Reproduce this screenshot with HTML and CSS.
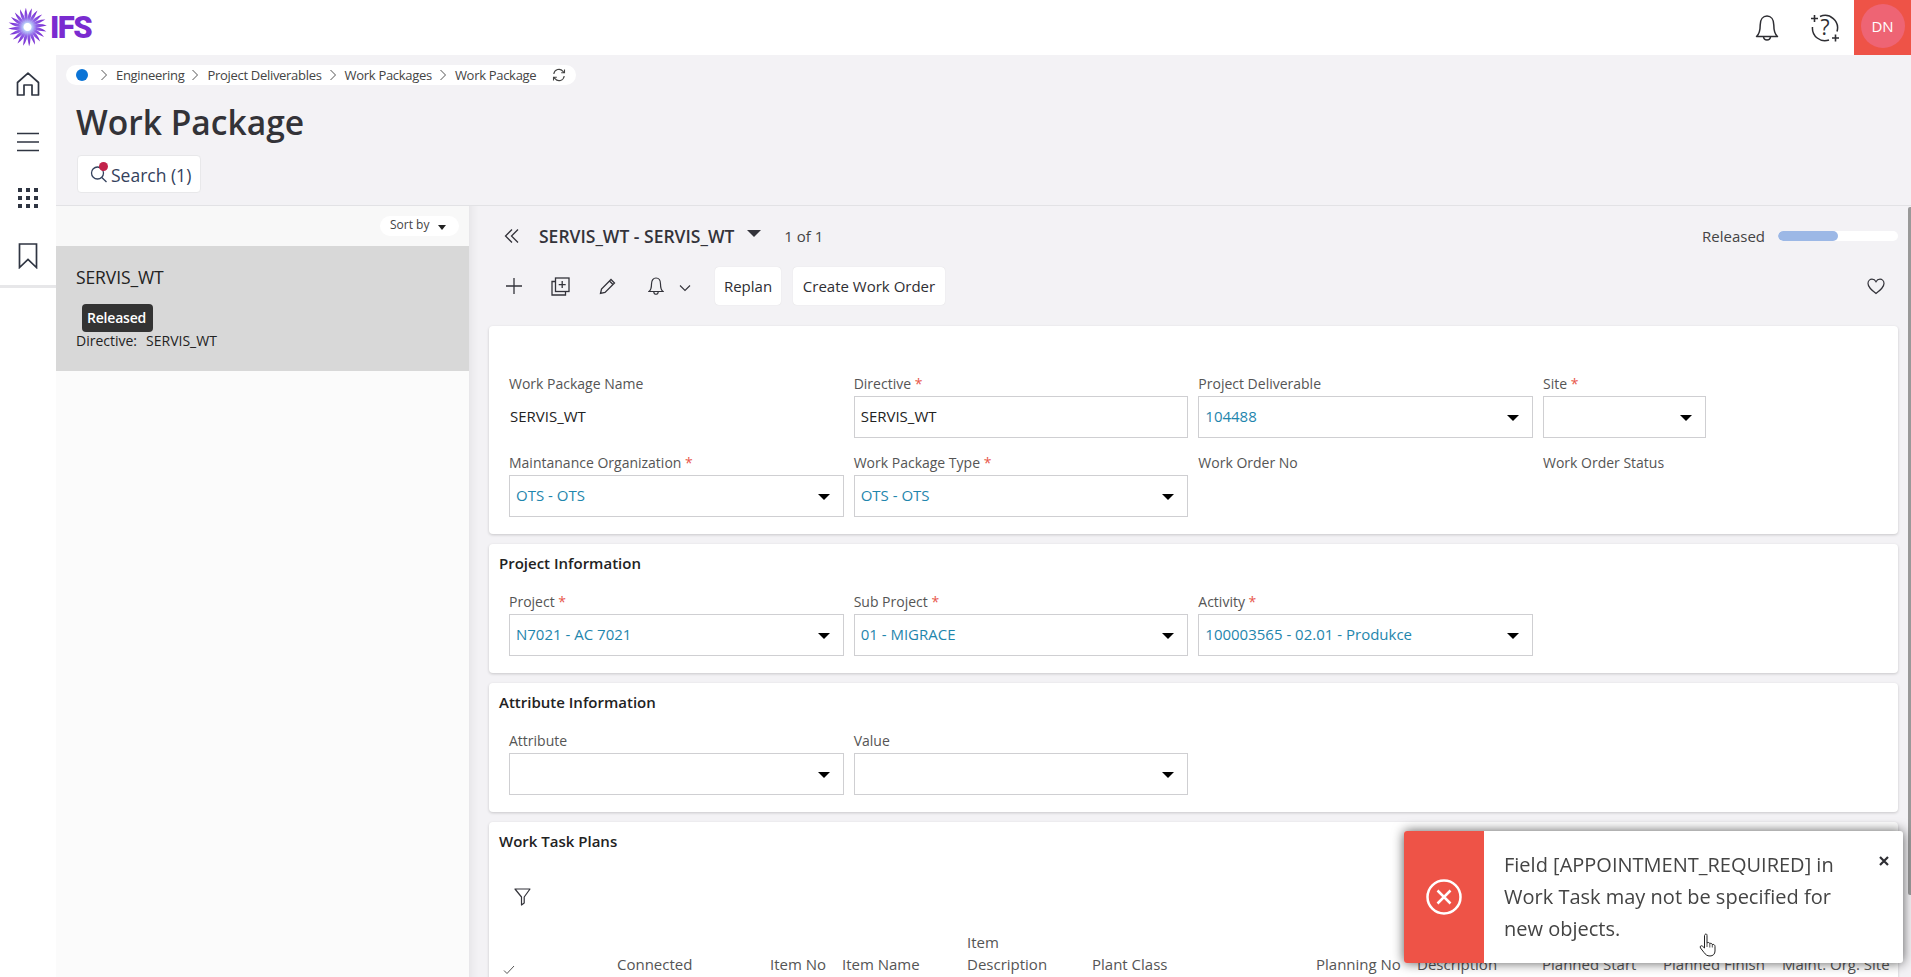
FILE: index.html
```html
<!DOCTYPE html>
<html lang="en">
<head>
<meta charset="utf-8">
<title>Work Package</title>
<link rel="stylesheet" href="styles.css">
</head>
<body>
<svg class="defs" width="0" height="0" aria-hidden="true">
  <defs>
    <symbol id="crumb" viewBox="0 0 8 12"><path d="M1.5 1 L6.5 6 L1.5 11" fill="none" stroke="#555" stroke-width="1"/></symbol>
    <linearGradient id="petal" gradientUnits="userSpaceOnUse" x1="0" y1="-4" x2="3" y2="-19">
      <stop offset="0" stop-color="#bcd4fb"/><stop offset=".35" stop-color="#8f5fe6"/><stop offset="1" stop-color="#7320cc"/>
    </linearGradient>
    <path id="ray" d="M-.5 -4 Q-.4 -12.5 4.400 -18.800 Q4.300 -11.500 1.700 -4 Z" fill="url(#petal)"/>
  </defs>
</svg>

<header class="topbar">
  <div class="logo">
    <svg class="logo-mark" width="40" height="40" viewBox="0 0 40 40">
      <g transform="translate(19.5 19)">
        <use href="#ray"/><use href="#ray" transform="rotate(18)"/><use href="#ray" transform="rotate(36)"/><use href="#ray" transform="rotate(54)"/><use href="#ray" transform="rotate(72)"/><use href="#ray" transform="rotate(90)"/><use href="#ray" transform="rotate(108)"/><use href="#ray" transform="rotate(126)"/><use href="#ray" transform="rotate(144)"/><use href="#ray" transform="rotate(162)"/><use href="#ray" transform="rotate(180)"/><use href="#ray" transform="rotate(198)"/><use href="#ray" transform="rotate(216)"/><use href="#ray" transform="rotate(234)"/><use href="#ray" transform="rotate(252)"/><use href="#ray" transform="rotate(270)"/><use href="#ray" transform="rotate(288)"/><use href="#ray" transform="rotate(306)"/><use href="#ray" transform="rotate(324)"/><use href="#ray" transform="rotate(342)"/>
      </g>
    </svg>
    <span class="logo-text">IFS</span>
  </div>
  <div class="top-actions">
    <svg class="top-icon bell-top" width="24" height="28" viewBox="0 0 24 28" fill="none" stroke="#2e2e33" stroke-width="1.5"><path d="M1.5 22.5 C4.5 20 5.2 16 5.2 11 C5.2 5.5 8 2 12 2 C16 2 18.8 5.5 18.8 11 C18.8 16 19.5 20 22.5 22.5 Z" stroke-linejoin="round"/><path d="M8.5 23 C9 27 15 27 15.500 23"/></svg>
    <svg class="top-icon help-top" width="30" height="30" viewBox="0 0 30 30" fill="none" stroke="#2e2e33" stroke-width="1.5"><path d="M10 3.500 A12.500 12.500 0 0 1 27 18.500"/><path d="M19 27 A12.500 12.500 0 0 1 2.500 14"/><path d="M1 5.500 H8 M4.500 2 V9 M22 25 H29 M25.500 21.500 V28.500" stroke-width="1.600"/><text class="help-q" x="15" y="21.500" text-anchor="middle">?</text></svg>
    <div class="user"><span class="avatar">DN</span></div>
  </div>
</header>

<div class="shell">
  <nav class="rail">
    <div class="rail-items">
      <svg width="24" height="24" viewBox="0 0 24 24" fill="none" stroke="#2f3542" stroke-width="1.700"><path d="M1.500 10.500 L12 1.200 L22.500 10.500 V23 H16 V13 H8 V23 H1.500 Z" stroke-linejoin="round"/></svg>
      <svg width="24" height="20" viewBox="0 0 24 20" fill="none" stroke="#2f3542" stroke-width="1.700"><path d="M1 1.500 H23 M1 10 H23 M1 18.500 H23"/></svg>
      <svg class="grid-icon" width="20" height="20" viewBox="0 0 20 20" fill="#2f3542"><rect x="0" y="0" width="4" height="4"/><rect x="8" y="0" width="4" height="4"/><rect x="16" y="0" width="4" height="4"/><rect x="0" y="8" width="4" height="4"/><rect x="8" y="8" width="4" height="4"/><rect x="16" y="8" width="4" height="4"/><rect x="0" y="16" width="4" height="4"/><rect x="8" y="16" width="4" height="4"/><rect x="16" y="16" width="4" height="4"/></svg>
      <svg width="20" height="26" viewBox="0 0 20 26" fill="none" stroke="#2f3542" stroke-width="1.700"><path d="M1.500 1 H18.500 V24.500 L10 16.500 L1.500 24.500 Z" stroke-linejoin="miter"/></svg>
    </div>
  </nav>

  <main class="content">
    <div class="page-head">
      <div class="breadcrumb">
        <span class="crumb-dot"></span>
        <svg class="crumb-sep first" width="8" height="12"><use href="#crumb"/></svg>
        <span>Engineering</span>
        <svg class="crumb-sep" width="8" height="12"><use href="#crumb"/></svg>
        <span>Project Deliverables</span>
        <svg class="crumb-sep" width="8" height="12"><use href="#crumb"/></svg>
        <span>Work Packages</span>
        <svg class="crumb-sep" width="8" height="12"><use href="#crumb"/></svg>
        <span>Work Package</span>
        <svg class="crumb-refresh" width="14" height="14" viewBox="0 0 14 14" fill="none" stroke="#444" stroke-width="1.100"><path d="M1.800 6 A5.200 5.200 0 0 1 11 3.300 L12.500 4.800 M12.500 1.500 V4.800 H9.200"/><path d="M12.200 8 A5.200 5.200 0 0 1 3 10.700 L1.500 9.200 M1.500 12.500 V9.200 H4.800"/></svg>
      </div>
      <h1 class="page-title">Work Package</h1>
      <button class="search-btn">
        <span class="search-icon">
          <svg width="18" height="18" viewBox="0 0 18 18" fill="none" stroke="#33415c" stroke-width="1.300"><circle cx="7.500" cy="8" r="6"/><path d="M11.800 12.500 L16.500 17"/></svg>
          <span class="search-dot"></span>
        </span>
        <span class="search-label">Search (1)</span>
      </button>
    </div>

    <div class="split">
      <aside class="list-pane">
        <div class="list-tools"><span class="sort">Sort by<i class="mini-caret"></i></span></div>
        <div class="list-item">
          <div class="item-name">SERVIS_WT</div>
          <span class="badge">Released</span>
          <div class="item-meta"><span>Directive:</span><span>SERVIS_WT</span></div>
        </div>
      </aside>

      <section class="detail">
        <span class="scrollbar"></span>
        <div class="detail-head">
          <svg class="collapse" width="16" height="16" viewBox="0 0 16 16" fill="none" stroke="#33333a" stroke-width="1.300"><path d="M8 1.500 L1.500 8 L8 14.500 M14 1.500 L7.500 8 L14 14.500"/></svg>
          <span class="record">SERVIS_WT - SERVIS_WT</span>
          <i class="record-caret"></i>
          <span class="pager">1 of 1</span>
          <span class="state">Released</span>
          <span class="progress"><span class="progress-fill"></span></span>
        </div>

        <div class="toolbar">
          <span class="tool"><svg width="18" height="18" viewBox="0 0 18 18" fill="none" stroke="#33333a" stroke-width="1.300"><path d="M9 1 V17 M1 9 H17"/></svg></span>
          <span class="tool"><svg width="19" height="19" viewBox="0 0 19 19" fill="none" stroke="#33333a" stroke-width="1.300"><rect x="4.500" y="1" width="13.500" height="13.500"/><path d="M4.500 4.500 H1 V18 H14.500 V14.500 M11.200 4 V11 M7.700 7.700 H14.700"/></svg></span>
          <span class="tool"><svg width="17" height="17" viewBox="0 0 17 17" fill="none" stroke="#33333a" stroke-width="1.300"><path d="M1.500 15.500 L2.500 11 L12 1.500 L15.500 5 L6 14.500 Z M10.500 3 L14 6.500"/></svg></span>
          <span class="tool tool-bell"><svg width="16" height="19" viewBox="0 0 16 19" fill="none" stroke="#33333a" stroke-width="1.200"><path d="M1 14.500 C3 13 3.500 10 3.500 7 C3.500 3.500 5.300 1 8 1 C10.700 1 12.500 3.500 12.500 7 C12.500 10 13 13 15 14.500 Z"/><path d="M5.800 15 C6 18 10 18 10.200 15"/></svg></span>
          <svg class="tool-chevron" width="12" height="8" viewBox="0 0 12 8" fill="none" stroke="#33333a" stroke-width="1.100"><path d="M1 1.500 L6 6.500 L11 1.500"/></svg>
          <button class="cmd cmd-first">Replan</button>
          <button class="cmd cmd-wide">Create Work Order</button>
          <svg class="heart" width="18" height="17" viewBox="0 0 18 17" fill="none" stroke="#33333a" stroke-width="1.200"><path d="M9 15.500 C4 11.500 1 9 1 5.500 C1 3 3 1.200 5 1.200 C6.800 1.200 8.200 2.200 9 3.700 C9.800 2.200 11.200 1.200 13 1.200 C15 1.200 17 3 17 5.500 C17 9 14 11.500 9 15.500 Z"/></svg>
        </div>

        <div class="card card-main">
          <div class="form-grid">
            <div class="field"><label>Work Package Name</label><div class="static">SERVIS_WT</div></div>
            <div class="field"><label>Directive <b>*</b></label><div class="box">SERVIS_WT</div></div>
            <div class="field"><label>Project Deliverable</label><div class="box link">104488<i class="caret"></i></div></div>
            <div class="field field-narrow"><label>Site <b>*</b></label><div class="box link"><i class="caret"></i></div></div>
            <div class="field"><label>Maintanance Organization <b>*</b></label><div class="box link">OTS - OTS<i class="caret"></i></div></div>
            <div class="field"><label>Work Package Type <b>*</b></label><div class="box link">OTS - OTS<i class="caret"></i></div></div>
            <div class="field"><label>Work Order No</label><div class="static"></div></div>
            <div class="field"><label>Work Order Status</label><div class="static"></div></div>
          </div>
        </div>

        <div class="card">
          <h2 class="card-title">Project Information</h2>
          <div class="form-grid">
            <div class="field"><label>Project <b>*</b></label><div class="box link">N7021 - AC 7021<i class="caret"></i></div></div>
            <div class="field"><label>Sub Project <b>*</b></label><div class="box link">01 - MIGRACE<i class="caret"></i></div></div>
            <div class="field"><label>Activity <b>*</b></label><div class="box link">100003565 - 02.01 - Produkce<i class="caret"></i></div></div>
          </div>
        </div>

        <div class="card">
          <h2 class="card-title">Attribute Information</h2>
          <div class="form-grid">
            <div class="field"><label>Attribute</label><div class="box"><i class="caret"></i></div></div>
            <div class="field"><label>Value</label><div class="box"><i class="caret"></i></div></div>
          </div>
        </div>

        <div class="card card-table">
          <h2 class="card-title">Work Task Plans</h2>
          <svg class="filter" width="17" height="18" viewBox="0 0 17 18" fill="none" stroke="#33333a" stroke-width="1.200"><path d="M1 1 H16 L10.200 9 V15 L7.500 17 V9 Z" stroke-linejoin="round"/></svg>
          <div class="table-head">
            <svg class="th-check" width="12" height="10" viewBox="0 0 12 10" fill="none" stroke="#555" stroke-width="1"><path d="M1 5.500 L4 8.500 L11 1"/></svg>
            <span class="th th-1">Connected</span>
            <span class="th th-2">Item No</span>
            <span class="th th-3">Item Name</span>
            <span class="th th-4">Item Description</span>
            <span class="th th-5">Plant Class</span>
            <span class="th th-6">Planning No</span>
            <span class="th th-7">Description</span>
            <span class="th th-8">Planned Start</span>
            <span class="th th-9">Planned Finish</span>
            <span class="th th-10">Maint. Org. Site</span>
          </div>
        </div>
      </section>
    </div>
  </main>
</div>

<div class="toast">
  <div class="toast-side">
    <svg width="36" height="36" viewBox="0 0 36 36" fill="none" stroke="#fff" stroke-width="2.500"><circle cx="18" cy="18" r="16.500"/><path d="M11.500 11.500 L24.500 24.500 M24.500 11.500 L11.500 24.500"/></svg>
  </div>
  <p class="toast-text">Field [APPOINTMENT_REQUIRED] in Work Task may not be specified for new objects.</p>
  <svg class="toast-close" width="10" height="10" viewBox="0 0 10 10" fill="none" stroke="#2e2e33" stroke-width="2.200"><path d="M1 1 L9 9 M9 1 L1 9"/></svg>
</div>

<svg class="cursor" width="18" height="24" viewBox="0 0 18 24"><path d="M6 1.500 C7 .5 8 1 8 2.500 V10 C9 9 10.500 9.500 10.800 10.500 C12 10 13 10.500 13.300 11.500 C14.500 11 16 11.800 16 13.500 V18 C16 21 14 23 11 23 C8 23 6.500 21.500 5 19.500 L1.500 15 C.5 13.500 2 12 3.500 13.200 L5.500 15 V2.500 Z" fill="#fff" stroke="#222" stroke-width="1"/><path d="M8 10 V14 M10.800 10.500 V14.500 M13.300 11.500 V14.500" stroke="#222" stroke-width=".8"/></svg>
</body>
</html>
```

FILE: styles.css
```css
* { box-sizing: border-box; }
html, body { margin: 0; height: 977px; overflow: hidden; }
body { font-family: "Open Sans", "Noto Sans", sans-serif; font-size: 14px; color: #2e2e33; background: #fff; }
.defs { position: absolute; }

.topbar { height: 55px; display: flex; align-items: center; justify-content: space-between; background: #fff; }
.logo { display: flex; align-items: center; padding-left: 8px; height: 50px; }
.logo-mark { display: block; flex: none; }
.logo-text { margin-left: 2px; font-family: "Roboto", "Liberation Sans", sans-serif; font-weight: 900; font-size: 31px; line-height: 50px; letter-spacing: -1.5px; color: #7a2bd0; }
.top-actions { display: flex; align-items: center; height: 100%; }
.bell-top { margin-right: 31px; }
.help-top { margin-right: 14px; }
.help-q { font-family: "Open Sans", sans-serif; font-size: 21px; fill: #2e2e33; stroke: none; }
.user { width: 57px; height: 55px; background: #ee5347; display: flex; align-items: flex-start; justify-content: center; padding-top: 4px; }
.avatar { width: 44px; height: 44px; border-radius: 50%; background: #ee6474; color: #fff; font-size: 15px; display: flex; align-items: center; justify-content: center; }

.shell { display: flex; height: 922px; }
.rail { width: 56px; flex: none; background: #fff; }
.rail-items { height: 233px; border-bottom: 3px solid #e7e7e9; display: flex; flex-direction: column; align-items: center; padding-top: 17px; }
.rail-items svg { display: block; flex: none; margin-bottom: 36px; }
.rail-items .grid-icon { margin-bottom: 35px; }
.rail-items svg:last-child { margin-bottom: 0; }
.content { flex: 1; min-width: 0; display: flex; flex-direction: column; background: #f3f2f5; }

.page-head { height: 151px; padding: 10px 0 0 10px; border-bottom: 1px solid #e2e2e5; }
.breadcrumb { display: flex; align-items: center; height: 20px; width: 510px; background: #fff; border-radius: 10px; font-size: 13px; letter-spacing: -.3px; color: #444; padding-left: 10px; white-space: nowrap; }
.crumb-dot { width: 12px; height: 12px; background: #0b74d6; border-radius: 50%; flex: none; }
.crumb-sep { margin: 0 8px 0 7px; flex: none; }
.crumb-sep.first { margin-left: 12px; }
.crumb-refresh { margin-left: 16px; flex: none; }
.page-title { margin: 15px 0 0 10px; font-size: 33.6px; line-height: 44px; font-weight: 600; color: #333338; display: block; white-space: nowrap; }
.search-btn { display: flex; align-items: center; margin: 11px 0 0 11px; height: 38px; width: 124px; padding: 0 0 0 12px; background: #fff; border: 1px solid #e8e8ea; border-radius: 4px; font-family: inherit; font-size: 17.5px; color: #33415c; white-space: nowrap; }
.search-label { padding-top: 1px; }
.search-icon { position: relative; width: 18px; height: 18px; margin-right: 3px; display: block; }
.search-icon svg { display: block; }
.search-dot { position: absolute; top: -3px; left: 9px; width: 9px; height: 9px; border-radius: 50%; background: #c2224a; }

.split { flex: 1; display: flex; min-height: 0; }
.list-pane { width: 413px; flex: none; background: #fbfbfb; }
.list-tools { height: 40px; display: flex; justify-content: flex-end; align-items: flex-start; padding: 10px 10px 0 0; background: #f8f8f8; }
.sort { height: 20px; width: 79px; background: #fff; border-radius: 10px; display: flex; align-items: center; padding: 0 0 3px 10px; font-size: 12px; color: #444; }
.mini-caret { margin: 5px 0 0 9px; border: 4px solid transparent; border-top: 5px solid #222; border-bottom: 0; }
.list-item { height: 125px; background: #d8d8d8; padding: 20px 0 0 20px; color: #222; }
.item-name { font-size: 17.5px; line-height: 22px; letter-spacing: -.1px; }
.badge { display: inline-block; margin: 16px 0 0 6px; height: 28px; line-height: 28px; padding: 0 5px; width: 71px; background: #333; color: #fff; border-radius: 4px; font-size: 14px; font-weight: 600; letter-spacing: -.2px; }
.item-meta { display: flex; gap: 9px; font-size: 14px; line-height: 19px; margin-top: -1px; }

.detail { position: relative; flex: 1; min-width: 0; padding: 10px 13px 0 20px; overflow: hidden; box-shadow: inset 12px 0 10px -10px rgba(0,0,0,.07); }
.scrollbar { position: absolute; top: 1px; right: 0; width: 3px; height: 688px; background: #999; border-radius: 2px 0 0 2px; }
.detail-head { height: 40px; display: flex; align-items: center; }
.collapse { margin-left: 15px; flex: none; }
.record { margin-left: 19px; font-size: 17.5px; font-weight: 600; color: #33333a; white-space: nowrap; }
.record-caret { margin: -5px 0 0 13px; border: 7px solid transparent; border-top: 7px solid #33333a; border-bottom: 0; }
.pager { margin-left: 23px; font-size: 15px; font-weight: 500; color: #444; white-space: nowrap; }
.state { margin-left: auto; margin-right: 13px; font-size: 15px; color: #444; }
.progress { width: 120px; height: 10px; background: #fff; border-radius: 5px; display: block; overflow: hidden; }
.progress-fill { display: block; width: 60px; height: 10px; background: #9cb8e6; border-radius: 5px; }

.toolbar { margin-top: 11px; margin-bottom: 21px; height: 38px; display: flex; align-items: center; padding-left: 1px; }
.tool { width: 47px; display: flex; justify-content: center; }
.tool svg { display: block; }
.tool-bell { justify-content: flex-start; padding-left: 17px; width: 45px; }
.tool-chevron { margin: 3px 0 0 3px; }
.cmd { height: 38px; width: 66px; padding: 0; background: #fff; border: 0; border-radius: 4px; box-shadow: 0 0 1px rgba(0,0,0,.15); font-family: inherit; font-size: 15px; color: #2e2e33; margin-right: 12px; white-space: nowrap; }
.cmd-first { margin-left: 24px; }
.cmd-wide { width: 152px; }
.heart { margin-left: auto; margin-right: 13px; }

.card { background: #fff; border-radius: 4px; box-shadow: 0 1px 3px rgba(0,0,0,.18); padding: 9px 20px 17px; margin-bottom: 10px; }
.card-main { padding-top: 48px; }
.card-title { margin: 0 0 19px -10px; font-size: 15px; line-height: 20px; font-weight: 600; color: #222; }
.form-grid { display: grid; grid-template-columns: repeat(4, 334.67px); column-gap: 10px; row-gap: 15px; }
.field label { display: block; height: 20px; line-height: 20px; margin-bottom: 2px; color: #555; font-size: 14px; white-space: nowrap; }
.field label b { color: #e8574c; font-weight: 400; }
.field-narrow { width: 163px; }
.box { height: 42px; border: 1px solid #cfcfd2; display: flex; align-items: center; justify-content: space-between; padding: 0 13px 2px 6px; font-size: 15px; color: #222; background: #fff; white-space: nowrap; }
.box.link { color: #1f86ad; }
.box > .caret:only-child { margin-left: auto; }
.static { height: 42px; display: flex; align-items: center; font-size: 15px; color: #222; padding: 0 0 2px 1px; }
.caret { border: 6px solid transparent; border-top: 6px solid #000; border-bottom: 0; margin-top: 4px; }

.card-table { height: 200px; margin: 0; padding-bottom: 0; }
.filter { display: block; margin: 37px 0 0 5px; }
.table-head { position: relative; display: flex; align-items: flex-end; margin: 25px 0 0 -10px; height: 44px; color: #555; font-size: 15px; line-height: 22px; }
.th-check { width: 12px; margin: 0 102px 0 4px; flex: none; }
.th { flex: none; }
.th-1 { width: 153px; }
.th-2 { width: 72px; }
.th-3 { width: 125px; }
.th-4 { width: 125px; padding-right: 20px; }
.th-5 { width: 224px; }
.th-6 { width: 101px; }
.th-7 { width: 125px; }
.th-8 { width: 121px; }
.th-9 { width: 119px; }
.th-10 { white-space: nowrap; }

.toast { position: fixed; right: 8px; top: 831px; width: 499px; height: 132px; display: flex; background: #fff; border-radius: 3px; overflow: visible; box-shadow: 0 0 12px rgba(0,0,0,.65); }
.toast-side { width: 80px; flex: none; background: #ee5347; border-radius: 3px 0 0 3px; display: flex; align-items: center; justify-content: center; }
.toast-text { margin: 18px 0 0 20px; width: 350px; font-size: 20px; line-height: 32px; color: #444; }
.toast-close { position: absolute; top: 25px; right: 14px; }
.cursor { position: fixed; left: 1699px; top: 933px; }
```
